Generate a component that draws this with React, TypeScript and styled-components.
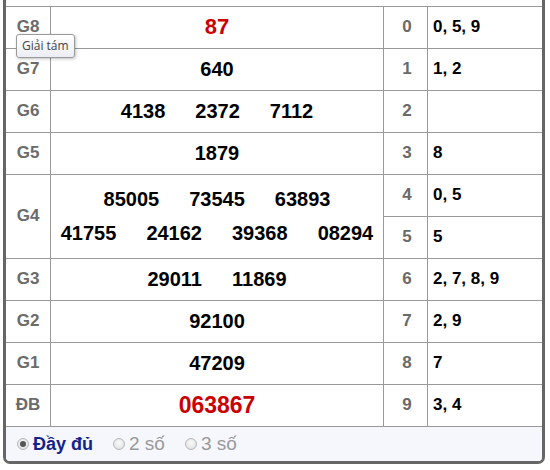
import React from "react";
import styled, { createGlobalStyle } from "styled-components";

const Global = createGlobalStyle`
  html, body { margin: 0; padding: 0; background: #fff; }
  body { font-family: "Liberation Sans", Arial, sans-serif; }
`;

const Frame = styled.div`
  position: relative;
  box-sizing: border-box;
  width: 542px;
  margin-left: 3px;
  padding-top: 6px;
  border: 3px solid #666;
  border-top: none;
  border-radius: 0 0 7px 7px;
  background: #fff;
  overflow: hidden;
`;

const Grid = styled.div`
  display: grid;
  grid-template-columns: 45px 333px 44px 1fr;
  grid-auto-rows: 42px;
  border-top: 1px solid #999;
`;

const Cell = styled.div<{ $span?: number; $last?: boolean }>`
  box-sizing: border-box;
  grid-row: span ${(p) => p.$span ?? 1};
  padding-bottom: 2px;
  border-bottom: 1px solid #999;
  border-right: ${(p) => (p.$last ? "none" : "1px solid #999")};
  display: flex;
  align-items: center;
`;

const Label = styled(Cell)`
  justify-content: center;
  font-weight: bold;
  font-size: 17px;
  color: #6b6b6b;
`;

const Numbers = styled(Cell)`
  flex-direction: column;
  justify-content: center;
  gap: 12px;
`;

const NumLine = styled.div`
  display: flex;
  justify-content: center;
  gap: 30px;
`;

const Num = styled.span<{ $size: number; $red?: boolean }>`
  font-weight: bold;
  font-size: ${(p) => p.$size}px;
  color: ${(p) => (p.$red ? "#cc0000" : "#000")};
  line-height: 22px;
`;

const Head = styled(Cell)`
  justify-content: center;
  padding-left: 3px;
  font-weight: bold;
  font-size: 17px;
  color: #6a6a6a;
`;

const Tail = styled(Cell)`
  padding-left: 5px;
  font-weight: bold;
  font-size: 17px;
  color: #000;
`;

const Footer = styled.div`
  height: 34px;
  background: #f5f7fd;
  display: flex;
  align-items: center;
  padding-left: 11px;
  gap: 20px;
`;

const Option = styled.label<{ $on?: boolean }>`
  display: flex;
  align-items: center;
  gap: 4px;
  font-size: ${(p) => (p.$on ? "18px" : "19px")};
  font-weight: ${(p) => (p.$on ? "bold" : "normal")};
  color: ${(p) => (p.$on ? "#14238a" : "#999")};
`;

const Radio = styled.span<{ $on?: boolean }>`
  box-sizing: border-box;
  width: 12px;
  height: 12px;
  border-radius: 50%;
  border: 1px solid #b8b8b8;
  background: radial-gradient(circle at 50% 40%, #fafafa, #dcdcdc);
  display: flex;
  align-items: center;
  justify-content: center;
  &::after {
    content: "";
    width: 6px;
    height: 6px;
    border-radius: 50%;
    background: ${(p) => (p.$on ? "#555" : "transparent")};
  }
`;

const Tooltip = styled.div`
  position: absolute;
  left: 10px;
  top: 34px;
  padding: 2px 5px 3px;
  font-family: "Open Sans", "Noto Sans", sans-serif;
  font-size: 12px;
  color: #444;
  background: linear-gradient(#ffffff, #eceef5);
  border: 1px solid #9a9a9a;
  border-radius: 3px;
  box-shadow: 1px 1px 3px rgba(0, 0, 0, 0.25);
`;

type Prize = { label: string; lines: string[][]; red?: boolean; size: number; span?: number };

const prizes: Prize[] = [
  { label: "G8", lines: [["87"]], red: true, size: 22 },
  { label: "G7", lines: [["640"]], size: 20 },
  { label: "G6", lines: [["4138", "2372", "7112"]], size: 20 },
  { label: "G5", lines: [["1879"]], size: 20 },
  {
    label: "G4",
    lines: [
      ["85005", "73545", "63893"],
      ["41755", "24162", "39368", "08294"],
    ],
    size: 20,
    span: 2,
  },
  { label: "G3", lines: [["29011", "11869"]], size: 20 },
  { label: "G2", lines: [["92100"]], size: 20 },
  { label: "G1", lines: [["47209"]], size: 20 },
  { label: "ĐB", lines: [["063867"]], red: true, size: 23 },
];

const tails = ["0, 5, 9", "1, 2", "", "8", "0, 5", "5", "2, 7, 8, 9", "2, 9", "7", "3, 4"];

export default function App() {
  const cells: React.ReactNode[] = [];
  let d = 0;
  prizes.forEach((p) => {
    cells.push(
      <Label key={p.label + "l"} $span={p.span}>
        {p.label}
      </Label>
    );
    cells.push(
      <Numbers key={p.label + "n"} $span={p.span}>
        {p.lines.map((line, i) => (
          <NumLine key={i}>
            {line.map((n) => (
              <Num key={n} $size={p.size} $red={p.red}>
                {n}
              </Num>
            ))}
          </NumLine>
        ))}
      </Numbers>
    );
    const count = p.span ?? 1;
    for (let k = 0; k < count; k++) {
      cells.push(<Head key={"h" + d}>{d}</Head>);
      cells.push(
        <Tail key={"t" + d} $last>
          {tails[d]}
        </Tail>
      );
      d++;
    }
  });

  return (
    <>
      <Global />
      <Frame>
        <Grid>{cells}</Grid>
        <Footer>
          <Option $on>
            <Radio $on />
            Đầy đủ
          </Option>
          <Option>
            <Radio />2 số
          </Option>
          <Option>
            <Radio />3 số
          </Option>
        </Footer>
        <Tooltip>Giải tám</Tooltip>
      </Frame>
    </>
  );
}
